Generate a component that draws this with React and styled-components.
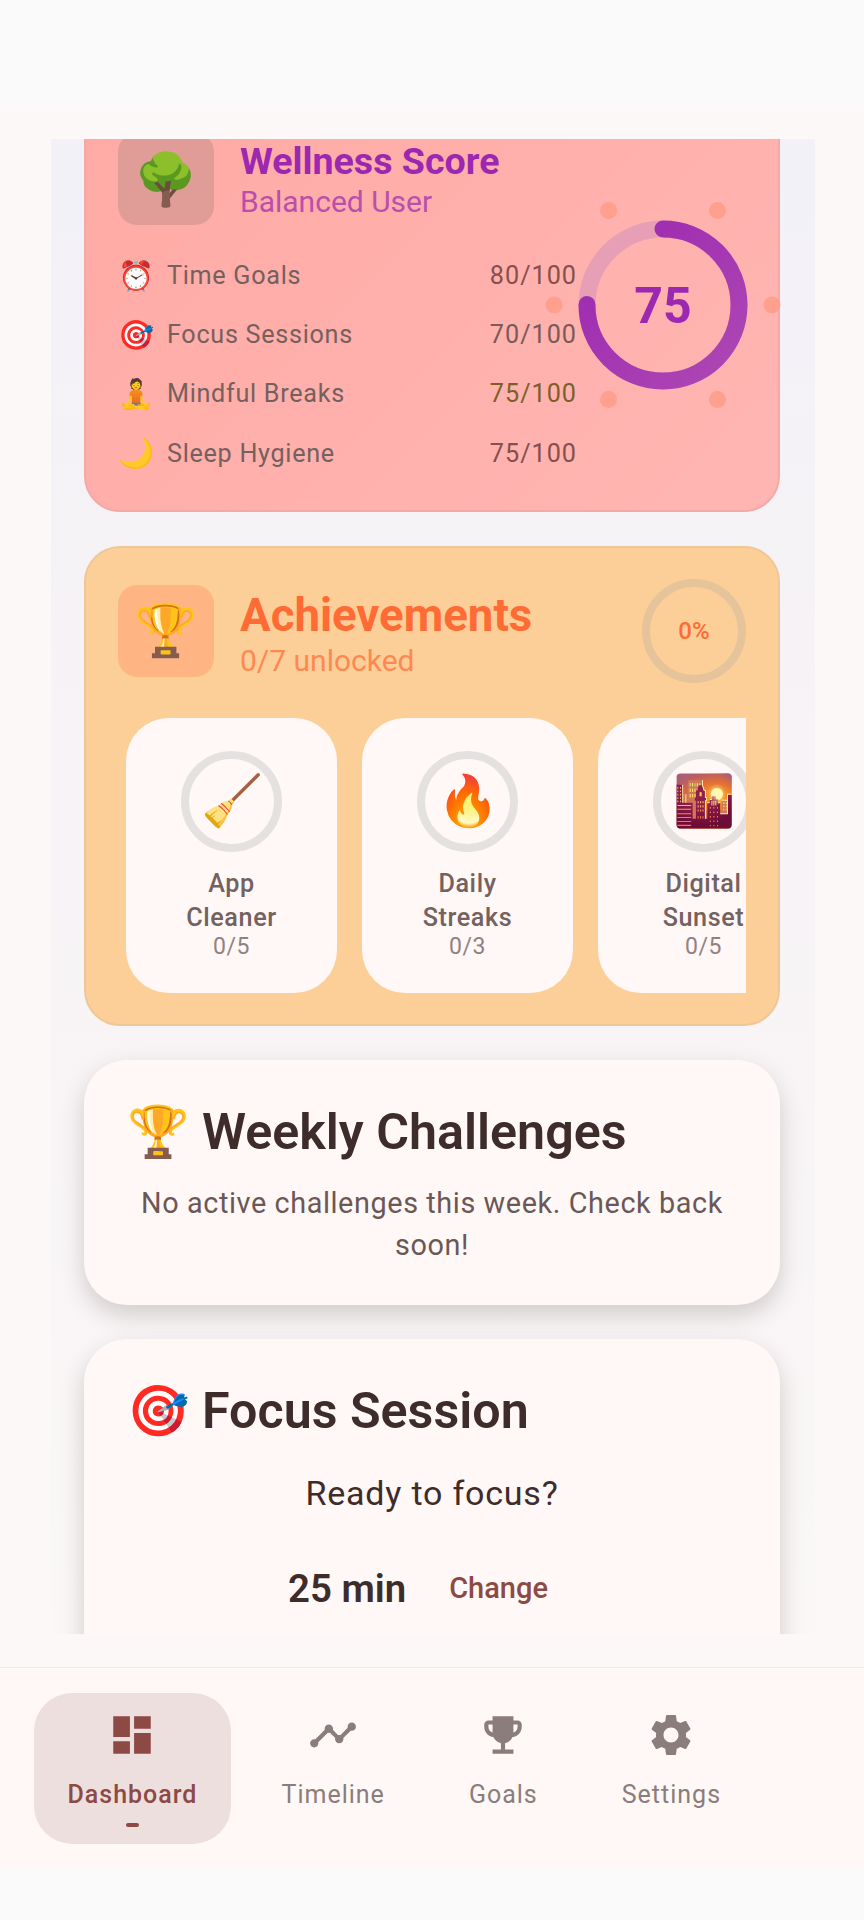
import React from "react";
import styled, { createGlobalStyle } from "styled-components";
import { MdDashboard, MdTimeline, MdEmojiEvents, MdSettings } from "react-icons/md";

const GlobalStyle = createGlobalStyle`
  html, body { margin: 0; padding: 0; background: #fafafa; }
  body { font-family: Roboto, "Noto Sans", sans-serif; }
  * { box-sizing: border-box; }
`;

const Screen = styled.div`
  width: 864px;
  height: 1920px;
  display: flex;
  flex-direction: column;
  overflow: hidden;
  background: #fafafa;
`;
const StatusBar = styled.div`
  height: 105px;
  flex: none;
  background: #fafafa;
`;
const Main = styled.main`
  flex: 1;
  min-height: 0;
  padding: 34px 49px 33px 51px;
  background: #fcf8f8;
  display: flex;
`;
const Scroller = styled.div`
  flex: 1;
  overflow: hidden;
  padding: 0 35px 0 33px;
  background: linear-gradient(180deg, #f2f1f8 0%, #f7f3f6 40%, #faf7f6 100%);
`;
const Stack = styled.div`
  margin-top: -39px;
  display: flex;
  flex-direction: column;
  gap: 34px;
`;
const ColorCard = styled.section`
  position: relative;
  border-radius: 36px;
  padding: 31px 32px ${p => p.$bottom}px;
  border: 2px solid ${p => p.$edge};
  background: ${p => p.$bg};
`;
const Header = styled.div`
  display: flex;
  align-items: center;
  gap: 26px;
`;
const IconBox = styled.div`
  width: 96px;
  height: 92px;
  flex: none;
  border-radius: 19px;
  display: flex;
  align-items: center;
  justify-content: center;
  font-size: 51px;
  background: ${p => p.$bg};
`;
const HeadText = styled.div`
  flex: 1;
  min-width: 0;
  padding-top: ${p => p.$top}px;
`;
const HeadTitle = styled.div`
  font-weight: 700;
  font-size: ${p => p.$size}px;
  line-height: 1.17;
  color: ${p => p.$color};
`;
const HeadSub = styled.div`
  font-size: 30px;
  line-height: 38px;
  color: ${p => p.$color};
  opacity: 0.7;
`;
const Rows = styled.div`
  margin-top: 21px;
  padding-right: 169px;
  display: flex;
  flex-direction: column;
`;
const Row = styled.div`
  height: 59.2px;
  display: flex;
  align-items: center;
  font-size: 25.2px;
  letter-spacing: 0.7px;
  color: #75605e;
`;
const RowEmoji = styled.span`
  width: 49px;
  flex: none;
  font-size: 29px;
`;
const RowLabel = styled.span`
  flex: 1;
`;
const RowValue = styled.span`
  letter-spacing: 1px;
  color: ${p => p.$color || "#85504c"};
`;
const Gauge = styled.svg`
  position: absolute;
  right: 6px;
  top: 94px;
  width: 218px;
  height: 218px;
  overflow: visible;
`;
const GaugeNumber = styled.text`
  font-family: Roboto, sans-serif;
  font-size: 50px;
  font-weight: 700;
  fill: #9c27b0;
`;
const SmallRing = styled.div`
  width: 104px;
  height: 104px;
  flex: none;
  border-radius: 50%;
  border: 8px solid #e5c49b;
  display: flex;
  align-items: center;
  justify-content: center;
  font-size: 24px;
  font-weight: 500;
  color: #ff6b35;
`;
const BadgeScroller = styled.div`
  margin-top: 35px;
  padding-left: 8px;
  display: flex;
  gap: 25px;
  overflow: hidden;
`;
const Badge = styled.div`
  width: 211px;
  height: 275px;
  flex: none;
  border-radius: 43px;
  padding-top: 33px;
  background: #fff8f6;
  display: flex;
  flex-direction: column;
  align-items: center;
  text-align: center;
`;
const BadgeRing = styled.div`
  width: 101px;
  height: 101px;
  flex: none;
  border-radius: 50%;
  border: 8px solid #e6e1e1;
  display: flex;
  align-items: center;
  justify-content: center;
  font-size: 50px;
  margin-bottom: 15px;
`;
const BadgeName = styled.div`
  width: 125px;
  font-size: 25.2px;
  line-height: 34px;
  font-weight: 500;
  letter-spacing: 0.6px;
  color: #736260;
`;
const BadgeCount = styled.div`
  font-size: 23px;
  line-height: 24px;
  letter-spacing: 0.6px;
  color: #8f8280;
`;
const Card = styled.section`
  border-radius: 43px;
  padding: 38px 43px 39px;
  min-height: ${p => p.$minHeight || 0}px;
  background: #fff8f6;
  box-shadow: 0 10px 24px rgba(60, 40, 35, 0.2);
`;
const CardTitle = styled.h2`
  margin: 0;
  display: flex;
  align-items: center;
  gap: 13px;
  font-size: 50.2px;
  line-height: 68px;
  font-weight: 600;
  color: #3e2c2a;
`;
const CardText = styled.p`
  margin: 16px 0 0;
  text-align: center;
  font-size: 28.8px;
  line-height: 42px;
  letter-spacing: 0.6px;
  color: #6b5856;
`;
const ReadyText = styled.div`
  margin-top: 25px;
  text-align: center;
  font-size: 34px;
  line-height: 46px;
  letter-spacing: 0.8px;
  color: #3e2c2a;
`;
const DurationRow = styled.div`
  margin-top: 50px;
  padding-right: 28px;
  display: flex;
  align-items: center;
  justify-content: center;
  gap: 43px;
`;
const Duration = styled.span`
  font-size: 38.4px;
  font-weight: 600;
  color: #3e2c2a;
`;
const ChangeLink = styled.span`
  font-size: 29px;
  font-weight: 500;
  color: #8d4a45;
`;
const Nav = styled.nav`
  height: 201px;
  flex: none;
  padding: 25px 34px 0;
  display: flex;
  align-items: flex-start;
  gap: 17px;
  background: #fff8f6;
  border-top: 1px solid #f0ecec;
`;
const NavItem = styled.div`
  height: 151px;
  padding: 17px 33.5px 0;
  border-radius: 38px;
  display: flex;
  flex-direction: column;
  align-items: center;
  background: ${p => (p.$active ? "#eedfdf" : "transparent")};
  color: ${p => (p.$active ? "#8d4a45" : "#8a7d7b")};
`;
const NavLabel = styled.div`
  margin-top: 18px;
  font-size: 25px;
  line-height: 34px;
  letter-spacing: 1px;
  font-weight: ${p => (p.$active ? 500 : 400)};
  white-space: nowrap;
`;
const NavMark = styled.div`
  margin-top: 11px;
  width: 13px;
  height: 4px;
  border-radius: 2px;
  background: #8d4a45;
`;
const HomeArea = styled.div`
  height: 52px;
  flex: none;
  background: #fafafa;
`;

const scores = [
  { emoji: "⏰", label: "Time Goals", value: "80/100" },
  { emoji: "🎯", label: "Focus Sessions", value: "70/100", color: "#7a5a56" },
  { emoji: "🧘", label: "Mindful Breaks", value: "75/100", color: "#7d5f2c" },
  { emoji: "🌙", label: "Sleep Hygiene", value: "75/100" },
];

const badges = [
  { emoji: "🧹", name: "App Cleaner", count: "0/5" },
  { emoji: "🔥", name: "Daily Streaks", count: "0/3" },
  { emoji: "🌇", name: "Digital Sunset", count: "0/5" },
];

const navItems = [
  { label: "Dashboard", Icon: MdDashboard, active: true },
  { label: "Timeline", Icon: MdTimeline },
  { label: "Goals", Icon: MdEmojiEvents },
  { label: "Settings", Icon: MdSettings },
];

const ScoreGauge = () => {
  const dots = [0, 60, 120, 180, 240, 300].map(a => [
    109 + 109 * Math.cos((a * Math.PI) / 180),
    109 + 109 * Math.sin((a * Math.PI) / 180),
  ]);
  const r = 76;
  const c = 2 * Math.PI * r;
  return (
    <Gauge viewBox="0 0 218 218">
      <defs>
        <linearGradient id="arc" x1="1" y1="0" x2="0" y2="1">
          <stop offset="0" stopColor="#9c27b0" />
          <stop offset="1" stopColor="#ae48b4" />
        </linearGradient>
      </defs>
      {dots.map(([x, y], i) => (
        <circle key={i} cx={x} cy={y} r="8.5" fill="#ff9f8e" />
      ))}
      <circle cx="109" cy="109" r={r} fill="none" stroke="#e79fb5" strokeWidth="17" />
      <circle
        cx="109"
        cy="109"
        r={r}
        fill="none"
        stroke="url(#arc)"
        strokeWidth="17"
        strokeLinecap="round"
        strokeDasharray={`${c * 0.75} ${c}`}
        transform="rotate(-90 109 109)"
      />
      <GaugeNumber x="109" y="127" textAnchor="middle">75</GaugeNumber>
    </Gauge>
  );
};

const App = () => (
  <Screen>
    <GlobalStyle />
    <StatusBar />
    <Main>
      <Scroller>
        <Stack>
          <ColorCard $bottom={27} $bg="linear-gradient(135deg, #ffaaa5, #ffb6b3)" $edge="#f3a9a5">
            <Header>
              <IconBox $bg="#e09c96">🌳</IconBox>
              <HeadText $top={2}>
                <HeadTitle $size={37.6} $color="#9c27b0">Wellness Score</HeadTitle>
                <HeadSub $color="#9c27b0">Balanced User</HeadSub>
              </HeadText>
            </Header>
            <Rows>
              {scores.map(s => (
                <Row key={s.label}>
                  <RowEmoji>{s.emoji}</RowEmoji>
                  <RowLabel>{s.label}</RowLabel>
                  <RowValue $color={s.color}>{s.value}</RowValue>
                </Row>
              ))}
            </Rows>
            <ScoreGauge />
          </ColorCard>

          <ColorCard $bottom={31} $bg="#fdcf98" $edge="#efc796">
            <Header>
              <IconBox $bg="#feb583">🏆</IconBox>
              <HeadText $top={7}>
                <HeadTitle $size={45.6} $color="#ff6b35">Achievements</HeadTitle>
                <HeadSub $color="#ff6b35">0/7 unlocked</HeadSub>
              </HeadText>
              <SmallRing>0%</SmallRing>
            </Header>
            <BadgeScroller>
              {badges.map(b => (
                <Badge key={b.name}>
                  <BadgeRing>{b.emoji}</BadgeRing>
                  <BadgeName>{b.name}</BadgeName>
                  <BadgeCount>{b.count}</BadgeCount>
                </Badge>
              ))}
            </BadgeScroller>
          </ColorCard>

          <Card>
            <CardTitle><span>🏆</span>Weekly Challenges</CardTitle>
            <CardText>No active challenges this week. Check back soon!</CardText>
          </Card>

          <Card $minHeight={420}>
            <CardTitle><span>🎯</span>Focus Session</CardTitle>
            <ReadyText>Ready to focus?</ReadyText>
            <DurationRow>
              <Duration>25 min</Duration>
              <ChangeLink>Change</ChangeLink>
            </DurationRow>
          </Card>
        </Stack>
      </Scroller>
    </Main>
    <Nav>
      {navItems.map(({ label, Icon, active }) => (
        <NavItem key={label} $active={active}>
          <Icon size={50} />
          <NavLabel $active={active}>{label}</NavLabel>
          {active && <NavMark />}
        </NavItem>
      ))}
    </Nav>
    <HomeArea />
  </Screen>
);

export default App;
